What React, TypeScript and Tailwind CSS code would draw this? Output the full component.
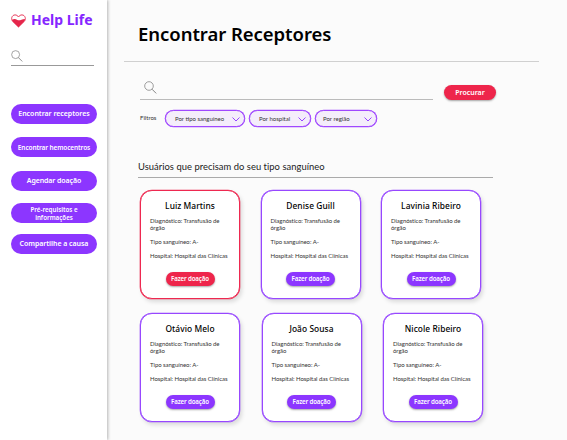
import React from "react";

function SearchIcon({ className }: { className: string }) {
  return (
    <svg viewBox="0 0 13 13" className={className} fill="none" stroke="#858585" strokeWidth="0.8">
      <circle cx="5" cy="5" r="4.3" />
      <path d="M8 8.2 12.2 12.4" strokeWidth="1" />
    </svg>
  );
}

function HeartLogo() {
  return (
    <svg viewBox="0 0 15 14" className="mt-[2px] h-[14px] w-[15px] shrink-0">
      <path d="M7.5 12.9 1.6 7.2C-.2 5.2.6 1.1 4 .9c1.600 0 2.800.9 3.500 2.100C8.200 1.800 9.400.9 11 .9c3.400.2 4.200 4.300 2.400 6.300Z" fill="#fff" stroke="#e5264b" strokeWidth="0.9" />
      <path d="M1 5.700C3 4.900 4.600 4.900 6.300 5.900 8.500 7 10.500 5.200 14 4.900 13.900 6.600 13.300 7.400 12.600 8.100L7.500 13.200 2.200 8.100C1.600 7.500 1.200 7 1 5.700Z" fill="#e5264b" />
    </svg>
  );
}

const menu = [
  { label: "Encontrar receptores", style: "mt-[38px] text-[7px] tracking-[-0.03px]" },
  { label: "Encontrar hemocentros", style: "mt-[13px] text-[6.5px] tracking-[-0.12px]" },
  { label: "Agendar doação", style: "mt-[14px] text-[7px] tracking-[-0.1px]" },
  { label: "Pré-requisitos e informações", style: "mt-[12px] px-4 text-[6.2px] leading-[7.5px]" },
  { label: "Compartilhe a causa", style: "mt-[11px] text-[7px] tracking-[-0.05px]" },
];

const filters = [
  { label: "Por tipo sanguíneo", style: "w-[80px] pl-[9px]" },
  { label: "Por hospital", style: "ml-[4px] w-[62px] pl-[9px]" },
  { label: "Por região", style: "ml-[4px] w-[62px] pl-[7px]" },
];

function Card({ name, urgent = false }: { name: string; urgent?: boolean }) {
  return (
    <article
      className={`flex h-[109px] w-[100px] shrink-0 flex-col rounded-[12px] border bg-white px-[9px] text-[6px] leading-[7px] tracking-[-0.04px] text-[#333] ${urgent ? "border-[#ee2850] shadow-[0_0_0_0.3px_#ee2850,2px_3px_4px_rgba(0,0,0,0.13)]" : "border-[#9747ff] shadow-[0_0_0_0.3px_#9747ff,2px_3px_4px_rgba(0,0,0,0.13)]"}`}
    >
      <h3 className="mt-[9px] text-center font-['Noto_Sans'] text-[8.4px] leading-[12px] font-medium tracking-[0.07px] whitespace-nowrap text-black">{name}</h3>
      <p className="mt-[5px]">Diagnóstico: Transfusão de<br />órgão</p>
      <p className="mt-[7px]">Tipo sanguíneo: A-</p>
      <p className="mt-[7px] whitespace-nowrap">Hospital: Hospital das Clínicas</p>
      <button
        className={`mt-[13px] h-[14px] w-[49px] self-center rounded-full font-['Noto_Sans'] text-[6.2px] leading-[14px] font-semibold tracking-[-0.16px] whitespace-nowrap text-white shadow-[0_1px_2px_rgba(0,0,0,0.35)] ${urgent ? "bg-[#ee254b]" : "bg-[#8c36ff]"}`}
      >
        Fazer doação
      </button>
    </article>
  );
}

export default function App() {
  return (
    <div className="flex h-[440px] w-[567px] overflow-hidden bg-[#fbfbfb] font-['Lato',sans-serif]">
      <aside className="z-10 flex w-[107px] shrink-0 flex-col bg-white pl-[11px] shadow-[1px_0_3px_rgba(0,0,0,0.28)]">
        <div className="mt-[10px] flex h-[20px] items-center">
          <HeartLogo />
          <span className="ml-[5px] font-['Noto_Sans'] text-[14px] leading-[20px] font-bold whitespace-nowrap text-[#8526ff]">Help Life</span>
        </div>
        <div className="mt-[20px] h-[16px] w-[83px] border-b border-[#999]">
          <SearchIcon className="size-[12px]" />
        </div>
        <nav className="flex flex-col font-['Noto_Sans'] font-semibold text-white">
          {menu.map((item) => (
            <button key={item.label} className={`flex h-[20px] w-[86px] items-center justify-center rounded-full bg-[#8c36ff] pt-px text-center ${item.style}`}>
              {item.label}
            </button>
          ))}
        </nav>
      </aside>

      <main className="min-w-0 flex-1">
        <header className="ml-[17px] h-[62px] w-[415px] border-b border-[#d0d0d0] pt-[21px] pl-[14px]">
          <h1 className="font-['Noto_Sans'] text-[18.500px] leading-[25px] font-semibold tracking-[-0.05px] whitespace-nowrap text-black">Encontrar Receptores</h1>
        </header>

        <section className="pl-[33px]">
          <div className="flex h-[38px]">
            <div className="h-[38px] w-[293px] border-b border-[#bbb] pt-[19px] pl-[4px]">
              <SearchIcon className="size-[13px]" />
            </div>
            <button className="mt-[23px] ml-[11px] h-[15px] w-[52px] rounded-full bg-[#ee254b] font-['Noto_Sans'] text-[7px] leading-[15px] font-semibold text-white shadow-[0_1px_2px_rgba(0,0,0,0.35)]">
              Procurar
            </button>
          </div>
          <div className="mt-[10px] flex h-[17px] text-[6px] text-[#333]">
            <span className="w-[25px] leading-[16px]">Filtros</span>
            {filters.map((filter) => (
              <button key={filter.label} className={`flex h-[17px] items-center justify-between rounded-full border border-[#a047ff] bg-[#f4edfb] pr-[4px] whitespace-nowrap shadow-[0_0_0_0.3px_#a047ff] ${filter.style}`}>
                {filter.label}
                <svg viewBox="0 0 8 5" className="mt-px h-[5px] w-[8px]" fill="none" stroke="#9747ff">
                  <path d="m.5.5 3.500 3.500L7.500.5" />
                </svg>
              </button>
            ))}
          </div>
        </section>

        <section className="pl-[31px]">
          <h2 className="mt-[32px] h-[19px] w-[355px] border-b border-[#aaa] text-[9.400px] leading-[15px] tracking-[0.04px] whitespace-nowrap text-[#222]">
            Usuários que precisam do seu tipo sanguíneo
          </h2>
          <div className="mt-[12px] ml-[2px] flex gap-[20.500px]">
            <Card name="Luiz Martins" urgent />
            <Card name="Denise Guill" />
            <Card name="Lavinia Ribeiro" />
          </div>
          <div className="mt-[14px] ml-[2px] flex gap-[21.500px]">
            <Card name="Otávio Melo" />
            <Card name="João Sousa" />
            <Card name="Nicole Ribeiro" />
          </div>
        </section>
      </main>
    </div>
  );
}
